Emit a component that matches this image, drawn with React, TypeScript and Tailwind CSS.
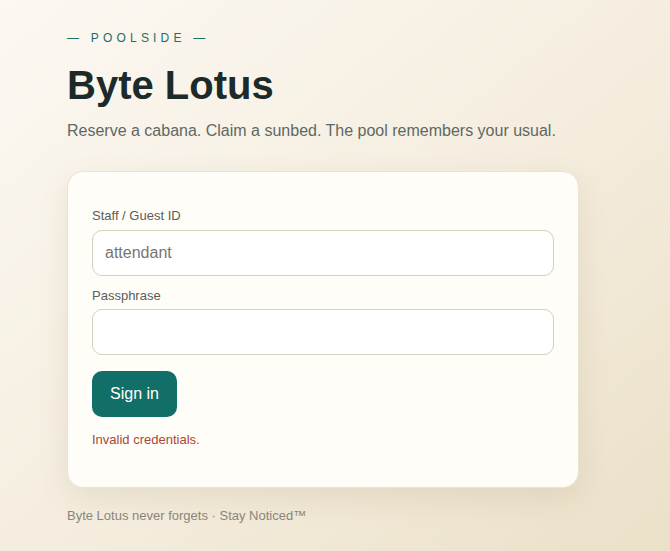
export default function App() {
  return (
    <div className="min-h-[551px] w-full bg-gradient-to-br from-[#fcf8f2] via-[#f5eee0] to-[#ebe0c8] font-['Liberation_Sans',Arial,sans-serif]">
      <div className="pl-[67px] pt-[31px] pb-[20px]">
        <p className="text-[12px] leading-[14px] tracking-[0.35em] text-[#1d6f66]">— POOLSIDE —</p>
        <h1 className="mt-[17px] text-[40px] leading-[46px] font-bold text-[#1c2a29]">Byte Lotus</h1>
        <p className="mt-[13px] text-[16px] leading-[20px] text-[#5f6863]">
          Reserve a cabana. Claim a sunbed. The pool remembers your usual.
        </p>

        {/* card */}
        <div className="mt-[30px] w-[512px] rounded-[16px] border border-[#ebe3d2] bg-[#fffdf8] px-[24px] pt-[36px] pb-[40px] shadow-[0_10px_30px_rgba(120,95,50,0.12)]">
          <label className="block text-[13px] leading-[15px] text-[#5b5e58]">Staff / Guest ID</label>
          <input
            placeholder="attendant"
            className="mt-[7px] block h-[46px] w-full rounded-[10px] border border-[#d7cfbd] bg-white px-[12px] text-[16px] text-[#3a3a36] placeholder:text-[#76766f] outline-none"
          />
          <label className="mt-[12px] block text-[13px] leading-[15px] text-[#5b5e58]">Passphrase</label>
          <input
            type="password"
            className="mt-[6px] block h-[46px] w-full rounded-[10px] border border-[#d7cfbd] bg-white px-[12px] text-[16px] outline-none"
          />
          <button className="mt-[16px] h-[46px] rounded-[10px] bg-[#126f68] px-[18px] text-[16px] text-white">
            Sign in
          </button>
          <p className="mt-[15px] text-[13px] leading-[15px] text-[#a84836]">Invalid credentials.</p>
        </div>

        <p className="mt-[20px] text-[13px] leading-[15px] text-[#8a857a]">Byte Lotus never forgets · Stay Noticed™</p>
      </div>
    </div>
  );
}
